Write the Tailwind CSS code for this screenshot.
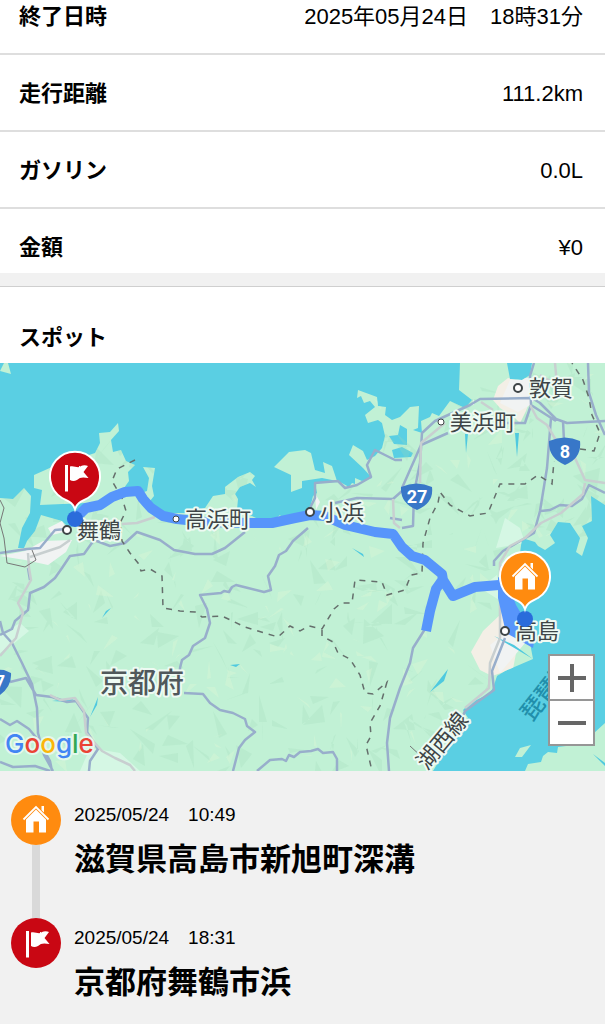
<!DOCTYPE html>
<html lang="ja">
<head>
<meta charset="utf-8">
<meta name="viewport" content="width=device-width, initial-scale=1">
<title>走行記録</title>
<script src="https://cdn.jsdelivr.net/npm/@tailwindcss/browser@4"></script>
</head>
<body class="min-h-screen bg-[#f1f1f1] font-['Liberation_Sans','Noto_Sans_CJK_JP',sans-serif] text-black">
<main>
  <dl class="bg-white text-[22px] leading-[31px]">
    <div class="flex items-center justify-between border-b-2 border-[#dedede] pt-px pr-[22px] pb-[21px] pl-[19px]">
      <dt class="font-bold">終了日時</dt><dd>2025年05月24日　18時31分</dd>
    </div>
    <div class="flex items-center justify-between border-b-2 border-[#dedede] pt-[23px] pr-[22px] pb-[21px] pl-[19px]">
      <dt class="font-bold">走行距離</dt><dd>111.2km</dd>
    </div>
    <div class="flex items-center justify-between border-b-2 border-[#dedede] pt-[23px] pr-[22px] pb-[21px] pl-[19px]">
      <dt class="font-bold">ガソリン</dt><dd>0.0L</dd>
    </div>
    <div class="flex items-center justify-between pt-[23px] pr-[22px] pb-[10px] pl-[19px]">
      <dt class="font-bold">金額</dt><dd>¥0</dd>
    </div>
  </dl>

  <section class="mt-[13px] border-t border-[#cfcfcf] bg-white">
    <h2 class="pt-[35px] pr-[22px] pb-[10px] pl-[19px] text-[22px] leading-[31px] font-bold">スポット</h2>

    <div class="relative h-[408px] overflow-hidden bg-[#5acfe3]">
      <svg class="block h-full w-full" viewBox="0 0 605 408" preserveAspectRatio="xMidYMid slice" role="img" aria-label="走行ルートの地図">
        <defs>
          <g id="house">
            <path d="M-12.500 -.5 L0 -13 L12.500 -.5" fill="none" stroke="#fff" stroke-width="1.800"/>
            <path d="M5.500 -14h2.500v6.500l-2.500 -2.500z M0 -10.500 L10 -.5V12.500H3V1.500H-2.500V12.500H-10V-.5z" fill="#fff"/>
          </g>
          <g id="flag">
            <path d="M-10 -12h3v26.500h-3z M-5 -10.500 C-1 -12 3 -8 6 -11 C8 -12 11 -12 13 -11 L8.500 -5 L13.500 1 C8 0 5 0 2 3 C-1 4.500 -3 4 -5 3z" fill="#fff"/>
          </g>
          <clipPath id="landClip"><use href="#mainland"/></clipPath>
        </defs>

        <g fill="#c1f1d5">
          <path id="mainland" d="M0 135 13 136 24 125 31 133 30 150 22 165 18 185 24 185 27 178 35 168 41 152 62 158 70 166 82 150 85 140 40 142 42 127 34 125 34 112 52 104 95 90 100 80 99 70 110 69 118 60 119 68 111 77 113 89 121 87 126 98 135 102 128 109 129 118 124 125 138 126 141 130 147 128 149 115 143 104 155 105 152 123 154 133 150 138 157 148 163 150 187 150 205 145 213 133 225 131 225 124 238 114 250 109 255 113 252 117 256 124 250 120 240 124 235 131 238 136 237 147 250 152 258 156 275 156 280 152 282 155 300 152 310 145 313 133 317 130 315 120 340 119 349 124 352 120 355 121 355 115 362 118 372 115 363 105 349 92 353 82 363 88 367 97 375 93 382 85 385 73 382 60 378 57 368 60 365 52 375 44 370 38 364 40 361 33 357 35 358 27 377 34 378 43 386 44 385 52 392 57 400 54 410 44 419 43 418 65 413 67 422 70 421 58 430 54 432 50 439 53 450 38 465 45 472 37 459 27 460 0 507 0 510 16 522 17 530 12 532 0H605V142L591 133 592 158 582 163 588 175 582 193 576 189 580 175 570 160 558 159 550 172 555 180 545 187 538 183 535 179 522 175 520 190 500 203 503 222 509 240 513 262 530 280 533 296 505 308 497 313 493 325 489 331 470 340 463 347 468 355 445 388 433 408H0z"/>
          <path d="M0 8 4 0H8L11 11z M274 104 289 89 305 87 311 90 315 107 325 110 323 99 332 103 337 118 322 115 302 118 302 125 291 129 291 112z M515 394 520 385 531 382 522 394z M543 393 548 389 557 390 558 384 582 381 605 360V408H525L528 401 541 399z"/>
        </g>
        <path d="M389 73 398 72 400 62 407 66 407 82 394 81z M392 87 402 84 413 90 411 94 394 95z" fill="#5acfe3"/>

        <g clip-path="url(#landClip)">
          <path id="shade" fill="#9fd8b8" opacity=".24"/>
          <path id="light" fill="#e6f7d7" opacity=".3"/>
          <path d="M508 15 498 23 493 37 500 45 515 55 520 60 526 48 531 34 527 20z M502 250 483 268 471 289 480 307 492 313 513 306 518 280z" fill="#f3efe6"/>
          <path d="M510 17 534 14 540 30 530 42 518 49 500 40z M490 282 515 263 530 274 500 310z M0 193 25 188 43 178 72 177 66 189 48 202 25 197z M471 42l3 -6v6z M501 177l9 -7 -5 11z" fill="#f1f3f3"/>
          <path d="M496 185 505 155 520 165 525 180z M480 225 497 212 504 240z M0 272 20 260 29 268 12 282 0 290z M90 385 120 390 140 408 80 408z" fill="#d5f7e4"/>
          <path d="M48 165 62 158 68 168 52 172z M315 130l5 9 -4 8z" fill="#f1f3f3"/>
        </g>
        <path d="M465 71 466 90 468 71z M515 70 517 94 519 70z M352 185 364 194 363 191z M102 255 111 245 106 248z M90 354 98 334 97 342z M52 338 75 335 70 339z M430 329 448 306 444 318z M230 302 240 301 236 304z M494 273 533 296 514 282z M593 391 605 400 605 403z" fill="#4fc9df"/>

        <g fill="none" stroke="#98aecb" stroke-width="2.500" stroke-linejoin="round">
          <path d="M0 190 27 186 40 185 55 167 66 166 M62 205 70 193 84 191 94 177 110 183 125 180 137 169 160 177 174 187 195 191 212 191 225 185 245 169 M62 205 55 215 44 224 30 230 28 247 15 258 12 266 0 272 M0 258 3 270 12 280 22 300 32 321 37 345 38 370 44 392 53 408 M0 356 10 362 17 358 29 366 39 378 50 398 52 408 M0 399 13 404 35 403 50 408 M10 319 26 315 36 332 52 334 67 339 76 338 88 355 87 369 98 386 90 398 89 408 M28 205 30 217"/>
          <path d="M308 165 293 178 286 188 279 192 275 203 268 213 271 227 264 229 248 225 236 222 232 224 229 229 224 228 221 230 200 232 207 246 210 260 205 275 193 283 189 292 182 297 180 305 180 318 M184 330 203 331 210 340 220 347 233 350 245 356 247 363 255 369 245 377 239 385 233 408 M257 408 270 397 282 396 286 398 289 392 294 394 300 389 311 388 318 386 323 390 333 389 337 396 337 408"/>
          <path d="M310 145 315 135 315 120 338 118 345 125 357 122 371 114 367 102 375 87 395 97 402 97 M335 140 357 135 393 136 402 128 M402 165 413 163 414 130 420 100 422 70 435 58 470 42 480 36 532 35 540 40 556 56 567 60 605 58 M402 125 421 82 448 70 M534 0 530 13 531 42 556 58 M531 42 525 60 507 60 M563 58 564 78 M551 55 549 80 547 105 540 148 534 170 503 188 494 198 494 203 M541 148 550 147 560 142 572 143 582 136 589 122 605 130 M588 0 589 30 596 52 605 72 M402 157 390 155 M425 266 413 285 410 300 400 325 390 355 387 380 389 408 M505 275 492 308 494 327 465 348 460 360"/>
        </g>
        <g fill="none" stroke="#c8cfd0" stroke-width="2.500" stroke-linejoin="round">
          <path d="M30 194 60 184 70 177 M28 190 29 205 31 217 18 240 23 250 16 275 0 293 M50 332 60 337 75 335 84 348 86 370 102 388 115 395 130 402 135 408 M122 161 137 160 155 154 M393 136 394 160 400 165 M420 120 421 80 445 60 M481 39 493 47 M530 42 537 55 547 62 560 84 575 95 585 117 605 120 M585 120 583 131 561 150 541 160 525 175 510 183 500 200 500 240 500 275 490 300 489 325 465 345 M555 0 557 22 540 12"/>
        </g>
        <g fill="none" stroke="#656f6c" stroke-width="1.500" stroke-dasharray="6 6">
          <path d="M135 97 117 106 112 118 122 135 126 148 120 160 122 178 130 190 138 200 141 208 150 206 162 213 163 245 180 248 195 249 202 254 222 253 245 264 278 274 290 263 300 268 309 263 322 266 334 246 341 240 352 240 355 217 382 219 387 232 405 227 411 212 422 210 423 180 430 155 438 140 440 129 450 142 470 153 488 150 500 121 525 121 538 112 552 121 554 98 M580 86 594 88 600 70 592 52 589 35 583 17 572 0 M322 267 322 273 333 279 338 290 350 296 360 312 365 330 373 331 387 319 380 343 370 360 371 373 366 382 372 408"/>
        </g>
        <path d="M0 137 4 145 0 160 4 175 7 200 25 204 36 197 32 187 M410 383l12 11" fill="none" stroke="#777" stroke-width="1"/>

        <!-- route -->
        <path d="M75 156 86 145 100 142 112 134 125 129 138 128 143 136 151 145 163 153 177 156 205 159 250 160 272 160 295 155 310 152 325 153 345 162 375 169 393 171 402 184 412 193 425 197 442 211 443 217 453 233 475 224 499 222 M443 216 436 226 430 248 426 268" fill="none" stroke="#5795fb" stroke-width="10" stroke-linejoin="round"/>
        <path d="M498 214 498 235 506 270 533 285 534 279 528 262 516 242 508 220z" fill="#5795fb"/>

        <!-- road shields -->
        <g fill="#3877c8">
          <path d="M401 124Q417 117 432 124Q434 140 417 147Q400 140 401 124z M549 78Q565 71 580 78Q582 95 565 102Q548 95 549 78z M-10 306 4 307 11 310Q12 323 0 332z"/>
        </g>
        <g fill="#fff" font-family="Roboto, sans-serif" font-weight="700" font-size="18" text-anchor="middle">
          <text x="417" y="140">27</text><text x="565" y="95">8</text><text x="0" y="325">7</text>
        </g>

        <!-- place names -->
        <text transform="translate(532 359) rotate(-52)" font-family="'Noto Sans CJK JP', sans-serif" font-weight="500" font-size="23" fill="#218fab">琵琶湖</text>
        <g font-family="'Noto Sans CJK JP', sans-serif" fill="#3e4547" stroke="#eefaf3" stroke-width="4" stroke-linejoin="round" paint-order="stroke" font-size="22">
          <text x="529" y="33">敦賀</text>
          <text x="450" y="67">美浜町</text>
          <text x="185" y="164">高浜町</text>
          <text x="320" y="157">小浜</text>
          <text x="77" y="175">舞鶴</text>
          <text x="515" y="276">高島</text>
          <text x="100" y="330" font-size="28" font-weight="500" fill="#50585b">京都府</text>
          <text transform="translate(427 408) rotate(-50)">湖西線</text>
        </g>
        <g fill="#fff" stroke="#3e4547" stroke-width="2">
          <circle cx="518" cy="25" r="4"/><circle cx="441" cy="59" r="3" stroke-width="1"/><circle cx="176" cy="156" r="3" stroke-width="1"/><circle cx="310" cy="149" r="4"/><circle cx="67" cy="167" r="4"/><circle cx="505" cy="268" r="4"/>
        </g>

        <!-- markers -->
        <g fill="#2a6cdb"><circle cx="75" cy="156" r="8"/><circle cx="525" cy="256" r="8"/></g>
        <g transform="translate(75 114)">
          <path d="M0 32C-2 25 -8 24 -13 21A25 25 0 1 1 13 21C8 24 2 25 0 32z" fill="#c90713" stroke="#fff" stroke-width="2"/>
          <use href="#flag"/>
        </g>
        <g transform="translate(525 214)">
          <path d="M0 32C-2 25 -8 24 -13 21A25 25 0 1 1 13 21C8 24 2 25 0 32z" fill="#ff8b0f" stroke="#fff" stroke-width="2"/>
          <use href="#house"/>
        </g>

        <text x="5" y="390" font-family="Inter, sans-serif" font-size="26" font-weight="500" stroke="#e4f8ed" stroke-width="4" stroke-linejoin="round" paint-order="stroke"><tspan fill="#4285f4">G</tspan><tspan fill="#ea4335">o</tspan><tspan fill="#fbb60a">o</tspan><tspan fill="#4285f4">g</tspan><tspan fill="#34a853">l</tspan><tspan fill="#ea4335">e</tspan></text>
      </svg>

      <div class="absolute right-[10px] bottom-[25px] flex flex-col">
        <button type="button" aria-label="拡大" class="grid h-[47px] w-[47px] place-items-center border-2 border-[#969696] bg-white">
          <svg class="h-7 w-7" viewBox="0 0 28 28" stroke="#666" stroke-width="4"><path d="M0 14H28M14 0V28"/></svg>
        </button>
        <button type="button" aria-label="縮小" class="-mt-[2px] grid h-[47px] w-[47px] place-items-center border-2 border-[#969696] bg-white">
          <svg class="h-7 w-7" viewBox="0 0 28 28" stroke="#666" stroke-width="4"><path d="M0 14H28"/></svg>
        </button>
      </div>
    </div>
  </section>

  <ol class="px-[11px] pt-6">
    <li class="flex gap-[13px]">
      <div class="flex flex-col items-center">
        <svg class="h-[50px] w-[50px] shrink-0" viewBox="-25 -25 50 50" aria-hidden="true"><circle r="25" fill="#ff8b0f"/><use href="#house"/></svg>
        <span class="w-2 grow bg-[#d9d9d9]"></span>
      </div>
      <div class="pt-2 pb-[33px]">
        <time class="block text-[19px] leading-6" datetime="2025-05-24T10:49">2025/05/24　10:49</time>
        <p class="mt-2 text-[31px] leading-[50px] font-bold">滋賀県高島市新旭町深溝</p>
      </div>
    </li>
    <li class="flex gap-[13px]">
      <svg class="h-[50px] w-[50px] shrink-0" viewBox="-25 -25 50 50" aria-hidden="true"><circle r="25" fill="#c90713"/><use href="#flag"/></svg>
      <div class="pt-2">
        <time class="block text-[19px] leading-6" datetime="2025-05-24T18:31">2025/05/24　18:31</time>
        <p class="mt-2 text-[31px] leading-[50px] font-bold">京都府舞鶴市浜</p>
      </div>
    </li>
  </ol>
</main>
<script>
  // Terrain facets scattered over the land with a fixed seed.
  let seed = 7;
  const rnd = () => (seed = (seed * 16807) % 2147483647) / 2147483647;
  const facets = (count, size) => {
    let d = '';
    for (let i = 0; i < count; i++) {
      const x = rnd() * 605, y = rnd() * 408;
      const p = () => Math.round(x + (rnd() - 0.5) * size) + ' ' + Math.round(y + (rnd() - 0.5) * size);
      d += 'M' + p() + 'L' + p() + 'L' + p() + 'z';
    }
    return d;
  };
  document.getElementById('shade').setAttribute('d', facets(420, 30));
  document.getElementById('light').setAttribute('d', facets(200, 20));
</script>
</body>
</html>
